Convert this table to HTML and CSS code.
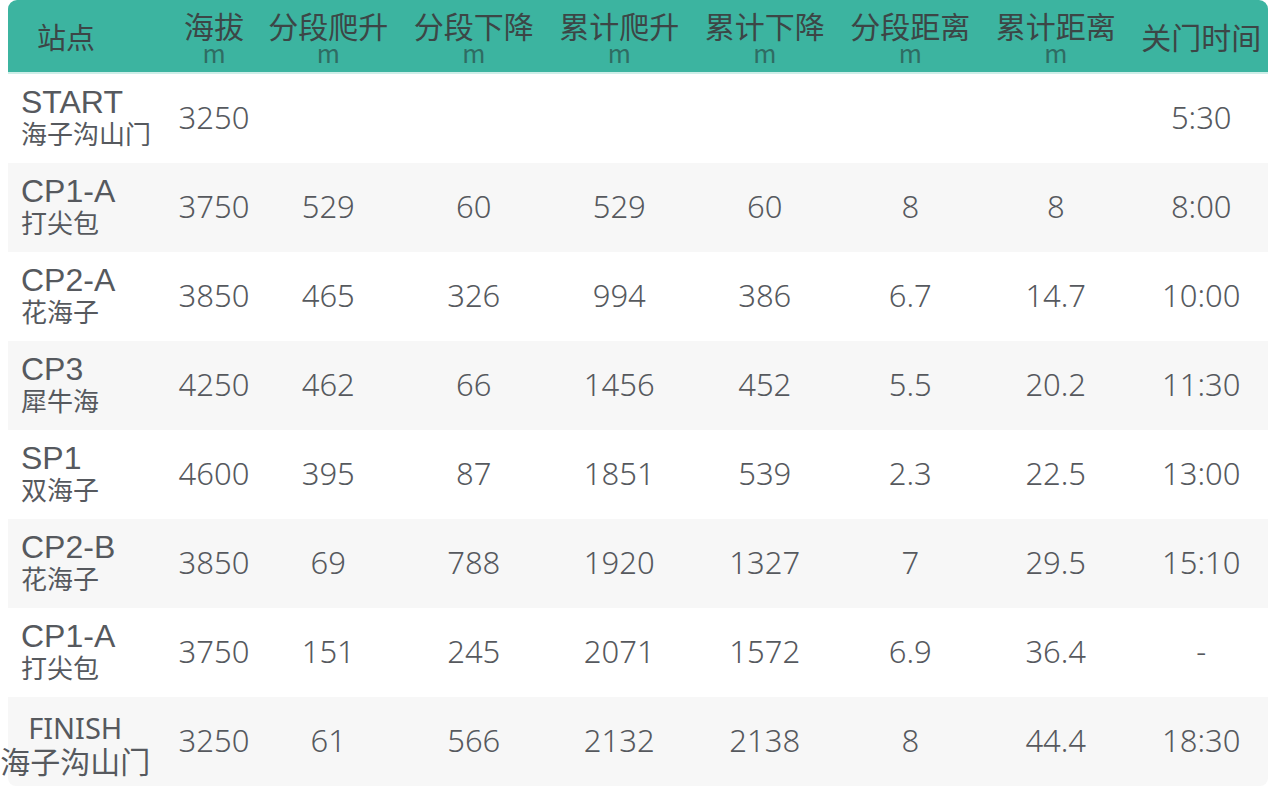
FILE: index.html
```html
<!DOCTYPE html>
<html lang="zh">
<head>
<meta charset="utf-8">
<title>站点表</title>
<link rel="stylesheet" href="styles.css">
</head>
<body>
<div class="table">
  <div class="row head">
    <div class="cell name-h">站点</div>
    <div class="cell"><span class="t">海拔</span><span class="u">m</span></div>
    <div class="cell"><span class="t">分段爬升</span><span class="u">m</span></div>
    <div class="cell"><span class="t">分段下降</span><span class="u">m</span></div>
    <div class="cell"><span class="t">累计爬升</span><span class="u">m</span></div>
    <div class="cell"><span class="t">累计下降</span><span class="u">m</span></div>
    <div class="cell"><span class="t">分段距离</span><span class="u">m</span></div>
    <div class="cell"><span class="t">累计距离</span><span class="u">m</span></div>
    <div class="cell single"><span class="t">关门时间</span></div>
  </div>

  <div class="row">
    <div class="cell name"><span class="code">START</span><span class="place">海子沟山门</span></div>
    <div class="cell">3250</div><div class="cell"></div><div class="cell"></div><div class="cell"></div><div class="cell"></div><div class="cell"></div><div class="cell"></div><div class="cell">5:30</div>
  </div>
  <div class="row alt">
    <div class="cell name"><span class="code">CP1-A</span><span class="place">打尖包</span></div>
    <div class="cell">3750</div><div class="cell">529</div><div class="cell">60</div><div class="cell">529</div><div class="cell">60</div><div class="cell">8</div><div class="cell">8</div><div class="cell">8:00</div>
  </div>
  <div class="row">
    <div class="cell name"><span class="code">CP2-A</span><span class="place">花海子</span></div>
    <div class="cell">3850</div><div class="cell">465</div><div class="cell">326</div><div class="cell">994</div><div class="cell">386</div><div class="cell">6.7</div><div class="cell">14.7</div><div class="cell">10:00</div>
  </div>
  <div class="row alt">
    <div class="cell name"><span class="code">CP3</span><span class="place">犀牛海</span></div>
    <div class="cell">4250</div><div class="cell">462</div><div class="cell">66</div><div class="cell">1456</div><div class="cell">452</div><div class="cell">5.5</div><div class="cell">20.2</div><div class="cell">11:30</div>
  </div>
  <div class="row">
    <div class="cell name"><span class="code">SP1</span><span class="place">双海子</span></div>
    <div class="cell">4600</div><div class="cell">395</div><div class="cell">87</div><div class="cell">1851</div><div class="cell">539</div><div class="cell">2.3</div><div class="cell">22.5</div><div class="cell">13:00</div>
  </div>
  <div class="row alt">
    <div class="cell name"><span class="code">CP2-B</span><span class="place">花海子</span></div>
    <div class="cell">3850</div><div class="cell">69</div><div class="cell">788</div><div class="cell">1920</div><div class="cell">1327</div><div class="cell">7</div><div class="cell">29.5</div><div class="cell">15:10</div>
  </div>
  <div class="row">
    <div class="cell name"><span class="code">CP1-A</span><span class="place">打尖包</span></div>
    <div class="cell">3750</div><div class="cell">151</div><div class="cell">245</div><div class="cell">2071</div><div class="cell">1572</div><div class="cell">6.9</div><div class="cell">36.4</div><div class="cell">-</div>
  </div>
  <div class="row alt last">
    <div class="cell name finish"><span class="code">FINISH</span><span class="place">海子沟山门</span></div>
    <div class="cell">3250</div><div class="cell">61</div><div class="cell">566</div><div class="cell">2132</div><div class="cell">2138</div><div class="cell">8</div><div class="cell">44.4</div><div class="cell">18:30</div>
  </div>
</div>
</body>
</html>
```

FILE: styles.css
```css
html, body {
  margin: 0;
  padding: 0;
  background: #ffffff;
}

body {
  font-family: "Noto Sans", "Noto Sans CJK SC", sans-serif;
  color: #56595e;
  overflow: hidden;
}

.table {
  margin-left: 8px;
  width: 1260px;
}

.row {
  display: grid;
  grid-template-columns: 164.5px 83px repeat(6, 145.5px) 139.5px;
  height: 89px;
  background: #ffffff;
}

.row.alt {
  background: #f7f7f7;
}

.row.last {
  border-radius: 0 0 8px 8px;
}

.row.head {
  height: 72px;
  background: #3cb4a0;
  border-radius: 9px 9px 0 0;
  border-bottom: 2px solid #cdeee8;
  color: #3c4646;
}

.cell {
  display: flex;
  flex-direction: column;
  align-items: center;
  justify-content: center;
  font-size: 31px;
  font-weight: 300;
  line-height: 34px;
  padding-bottom: 4px;
  white-space: nowrap;
  min-width: 0;
}

.row .cell:last-child {
  padding-left: 6px;
}

.head .cell {
  font-family: "Noto Sans CJK SC", sans-serif;
  font-size: 30px;
  font-weight: 400;
  justify-content: flex-start;
  padding-top: 9px;
  padding-bottom: 0;
}

.head .t {
  display: block;
  line-height: 32px;
}

.head .u {
  display: block;
  font-size: 25px;
  line-height: 22px;
  height: 22px;
  color: #2f6c63;
}

.head .name-h {
  align-items: flex-start;
  padding-left: 29px;
  padding-top: 19px;
  font-size: 29px;
}

.head .single {
  padding-top: 20px;
}

.name {
  align-items: flex-start;
  padding-left: 13px;
  padding-bottom: 4px;
  font-weight: 400;
}

.name .code {
  font-family: "Liberation Sans", Arial, sans-serif;
  font-size: 32px;
  line-height: 32px;
}

.name .place {
  font-family: "Noto Sans CJK SC", sans-serif;
  font-size: 26px;
  line-height: 30px;
}

.name.finish {
  align-items: center;
  padding-left: 0;
  padding-right: 30px;
  padding-bottom: 0;
  padding-top: 6px;
}

.name.finish .code {
  font-family: "Noto Sans", "Noto Sans CJK SC", sans-serif;
  font-size: 29px;
  line-height: 30px;
}

.name.finish .place {
  font-size: 30px;
  line-height: 34px;
}
```
